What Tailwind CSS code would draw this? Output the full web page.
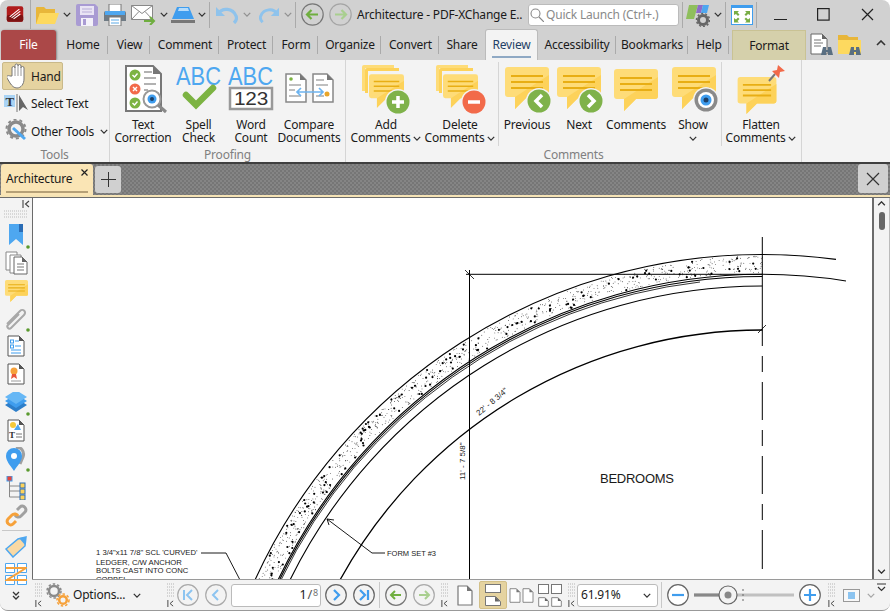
<!DOCTYPE html>
<html lang="en">
<head>
<meta charset="UTF-8">
<title>Architecture - PDF-XChange Editor</title>
<script src="https://cdn.jsdelivr.net/npm/@tailwindcss/browser@4"></script>
</head>
<body class="w-[890px] h-[612px] overflow-hidden bg-white font-['Noto_Sans',sans-serif] text-[12px] tracking-[-0.2px] text-[#1a1a1a]">

<!-- shared icons -->
<svg class="hidden">
  <symbol id="bubble" viewBox="0 0 44 42"><path d="M3 0h38a3 3 0 0 1 3 3v24a3 3 0 0 1-3 3H22L10 42V30H3a3 3 0 0 1-3-3V3a3 3 0 0 1 3-3z" fill="#fedc78"/><path d="M44 8v19a3 3 0 0 1-3 3H22L10 42V30z" fill="#fdd25a"/><path d="M6 9h32M6 15h32M6 21h32" stroke="#e8ae14" stroke-width="2"/></symbol>
  <symbol id="chev" viewBox="0 0 10 6"><path d="M1 1l4 4 4-4" fill="none" stroke="#333" stroke-width="1.6"/></symbol>
  <symbol id="grip" viewBox="0 0 9 15"><path d="M1 1h7M1 4h7M1 7h7M1 10h7M1 13h7" stroke="#b5b5b5" stroke-dasharray="1 1" fill="none"/></symbol>
  <symbol id="collapse" viewBox="0 0 8 8"><path d="M1 0v8M7 1L3.5 4 7 7" fill="none" stroke="#444" stroke-width="1.1"/></symbol>
  <symbol id="page" viewBox="0 0 16 21"><path d="M1 1h9l5 5v14H1z" fill="#fff" stroke="#777" stroke-width="1.2" stroke-linejoin="round"/><path d="M10 1l5 5h-5z" fill="#777"/></symbol>
</svg>

<div class="w-[890px] h-[611px] flex flex-col bg-[#d1d1d1] rounded-t-lg rounded-b-lg border-b border-[#999] overflow-hidden">

  <!-- title bar -->
  <div class="h-[29px] flex items-center shrink-0">
    <svg class="w-[31px] h-[29px] border-r border-[#aaa]" viewBox="0 0 31 29"><rect x="7" y="6" width="17" height="16" rx="2" fill="#b01c1c"/><rect x="7" y="15" width="17" height="7" rx="2" fill="#7d1212"/><path d="M10 17l10-8M12 18l9-7M14 19l7-5" stroke="#fff" stroke-width="1.1"/></svg>
    <svg class="ml-[5px] w-[23px] h-[20px]" viewBox="0 0 23 20"><path d="M0 3a1 1 0 0 1 1-1h7l2 2h9v4H4L1 19H0z" fill="#e8b63a"/><path d="M4 8h19l-4 11H0z" fill="#fdd95f"/></svg>
    <svg class="ml-[4px] w-[8px] h-[5px]"><use href="#chev"/></svg>
    <svg class="ml-[5px] w-[22px] h-[22px]" viewBox="0 0 22 22"><path d="M2 0h17l3 3v17a2 2 0 0 1-2 2H2a2 2 0 0 1-2-2V2a2 2 0 0 1 2-2z" fill="#a99bd3"/><rect x="4" y="2" width="14" height="9" fill="#e9e4f4"/><path d="M6 5h10M6 8h10" stroke="#b8add8"/><rect x="5" y="14" width="12" height="8" fill="#f3f1f9"/><rect x="7" y="15" width="3" height="6" fill="#a99bd3"/></svg>
    <svg class="ml-[6px] w-[22px] h-[22px]" viewBox="0 0 22 22"><rect x="5" y="0" width="12" height="8" fill="#fff" stroke="#777"/><path d="M2 7h18a2 2 0 0 1 2 2v8H0V9a2 2 0 0 1 2-2z" fill="#6f7b85"/><rect x="1" y="7" width="20" height="4" fill="#4ea7f0"/><rect x="5" y="13" width="12" height="9" fill="#fff" stroke="#777"/><path d="M7 16h8M7 19h8" stroke="#5aa9e6"/></svg>
    <svg class="ml-[5px] w-[25px] h-[21px]" viewBox="0 0 25 21"><path d="M.5 1.500h21v14H.5z" fill="#fff" stroke="#888"/><path d="M.5 1.500l10.500 8 10.500-8M.5 15.500l7.500-8M21.500 15.500l-7.500-8" fill="none" stroke="#888"/><path d="M13 17h9M19 13l4 4-4 4" fill="none" stroke="#6fae3f" stroke-width="2"/></svg>
    <svg class="ml-[4px] w-[8px] h-[5px]"><use href="#chev"/></svg>
    <svg class="ml-[3px] w-[24px] h-[16px]" viewBox="0 0 24 16"><path d="M6 0h12l5 12H1z" fill="#3f9dee"/><path d="M8 1h9l1 3H7z" fill="#b6dcfb"/><rect x="0" y="13" width="24" height="3" fill="#777"/></svg>
    <svg class="ml-[3px] w-[8px] h-[5px]"><use href="#chev"/></svg>
    <div class="ml-[3px] w-px h-[26px] bg-[#aaa]"></div>
    <svg class="ml-[6px] w-[22px] h-[18px]" viewBox="0 0 22 18"><path d="M2 8c4-7 15-6 18 2 1 2 0 5-2 7" fill="none" stroke="#8fc3ec" stroke-width="3.200"/><path d="M0 1v9h9z" fill="#8fc3ec"/></svg>
    <svg class="ml-[5px] w-[8px] h-[5px] opacity-40"><use href="#chev"/></svg>
    <svg class="ml-[8px] w-[20px] h-[18px]" viewBox="0 0 22 18"><path d="M20 8C16 1 5 2 2 10c-1 2 0 5 2 7" fill="none" stroke="#8fc3ec" stroke-width="3.200"/><path d="M22 1v9h-9z" fill="#8fc3ec"/></svg>
    <svg class="ml-[5px] w-[8px] h-[5px] opacity-40"><use href="#chev"/></svg>
    <div class="ml-[3px] w-px h-[26px] bg-[#aaa]"></div>
    <svg class="ml-[5px] w-[23px] h-[23px]" viewBox="0 0 23 23"><circle cx="11.500" cy="11.500" r="10.700" fill="none" stroke="#777" stroke-width="1.200"/><path d="M17 11.500H6M10.500 7l-4.500 4.500 4.500 4.500" fill="none" stroke="#6fae3f" stroke-width="2.200"/></svg>
    <svg class="ml-[5px] w-[23px] h-[23px]" viewBox="0 0 23 23"><circle cx="11.500" cy="11.500" r="10.700" fill="none" stroke="#a5a5a5" stroke-width="1.200"/><path d="M6 11.500h11M12.500 7l4.500 4.500-4.500 4.500" fill="none" stroke="#a9cf8f" stroke-width="2.200"/></svg>
    <span class="ml-[5px] w-[171px] whitespace-nowrap text-[12px]">Architecture - PDF-XChange E..</span>
    <div class="w-[151px] h-[22px] bg-white border border-[#bbb] rounded-[3px] flex items-center text-[#8a8a8a] text-[12px]">
      <svg class="ml-[1px] w-[14px] h-[14px]" viewBox="0 0 14 14"><circle cx="5.500" cy="5.500" r="4.500" fill="none" stroke="#888" stroke-width="1.100"/><path d="M9 9l5 5" stroke="#888" stroke-width="1.200"/></svg>
      <span class="ml-[2px] whitespace-nowrap">Quick Launch (Ctrl+.)</span>
    </div>
    <div class="ml-[3px] w-px h-[26px] bg-[#aaa]"></div>
    <svg class="ml-[3px] w-[24px] h-[24px]" viewBox="0 0 24 24"><path d="M3 2h9l-4 14H0z" fill="#8fbf5d"/><path d="M12 2h5l-2 8H10z" fill="#8d6cc9"/><path d="M17 2h6l-2 8h-6z" fill="#4ea7f0"/><circle cx="17" cy="17" r="4.500" fill="none" stroke="#666" stroke-width="3"/><circle cx="17" cy="17" r="6.500" fill="none" stroke="#666" stroke-width="1.500" stroke-dasharray="2 2"/></svg>
    <svg class="ml-[4px] w-[8px] h-[5px]"><use href="#chev"/></svg>
    <div class="ml-[3px] w-px h-[26px] bg-[#aaa]"></div>
    <svg class="ml-[5px] w-[22px] h-[20px]" viewBox="0 0 22 20"><rect x=".5" y=".5" width="21" height="19" fill="#fff" stroke="#3f9dee"/><rect x="0" y="0" width="22" height="3" fill="#3f9dee"/><path d="M3 6l5 0-1.500 1.500 2 2-1.500 1.500-2-2L3 10zM19 6h-5l1.500 1.500-2 2 1.500 1.500 2-2L19 10zM3 17.500h5l-1.500-1.500 2-2-1.500-1.500-2 2L3 13zM19 17.500h-5l1.500-1.500-2-2 1.500-1.500 2 2L19 13z" fill="#78ad45"/></svg>
    <div class="ml-[3px] w-px h-[26px] bg-[#aaa]"></div>
    <svg class="ml-[17px] w-[13px] h-[13px]" viewBox="0 0 13 13"><path d="M0 11.500h13" stroke="#222" stroke-width="1.200"/></svg>
    <svg class="ml-[30px] w-[13px] h-[13px]" viewBox="0 0 13 13"><rect x=".6" y=".6" width="11.500" height="11.500" fill="none" stroke="#222" stroke-width="1.200"/></svg>
    <svg class="ml-[31px] w-[13px] h-[13px]" viewBox="0 0 13 13"><path d="M1 1l11 11M12 1L1 12" stroke="#222" stroke-width="1.200"/></svg>
  </div>

  <!-- ribbon tabs -->
  <div class="h-[31px] flex items-center shrink-0 text-[12px]">
    <div class="ml-px w-[55px] h-[30px] mt-px self-start bg-[#ab4848] rounded-t-[3px] text-white flex items-center justify-center shadow-[1px_0_2px_#888]">File</div>
    <div class="w-[52px] h-[18px] pl-[3px] border-r border-[#aaa] flex items-center justify-center">Home</div>
    <div class="w-[42px] h-[18px] pl-[2px] border-r border-[#aaa] flex items-center justify-center">View</div>
    <div class="w-[69px] h-[18px] pl-[2px] border-r border-[#aaa] flex items-center justify-center">Comment</div>
    <div class="w-[54px] h-[18px] pl-[2px] border-r border-[#aaa] flex items-center justify-center">Protect</div>
    <div class="w-[45px] h-[18px] pl-[2px] border-r border-[#aaa] flex items-center justify-center">Form</div>
    <div class="w-[63px] h-[18px] pl-[2px] border-r border-[#aaa] flex items-center justify-center">Organize</div>
    <div class="w-[58px] h-[18px] pl-[2px] border-r border-[#aaa] flex items-center justify-center">Convert</div>
    <div class="w-[46px] h-[18px] flex items-center justify-center">Share</div>
    <div class="relative w-[53px] h-[31px] self-end bg-[#f3f3f3] border border-b-0 border-[#bbb] rounded-t-[3px] flex items-center justify-center text-[#1f3f66]">Review<div class="absolute left-[6px] right-[6px] bottom-[2px] h-[2px] bg-[#8fa9c4]"></div></div>
    <div class="w-[78px] h-[18px] pl-px border-r border-[#aaa] flex items-center justify-center">Accessibility</div>
    <div class="w-[72px] h-[18px] pl-px border-r border-[#aaa] flex items-center justify-center">Bookmarks</div>
    <div class="w-[41px] h-[18px] pl-[2px] border-r border-[#aaa] flex items-center justify-center">Help</div>
    <div class="ml-[3px] w-[74px] h-[30px] self-end bg-[#d5d0ab] border-x border-t border-[#c9c294] flex items-center justify-center">Format</div>
    <svg class="ml-[4px] w-[24px] h-[24px]" viewBox="0 0 24 24"><path d="M1 1h11l5 5v15H1z" fill="#fff" stroke="#666"/><path d="M12 1l5 5h-5z" fill="#666"/><path d="M4 7h7M4 10h9M4 13h7" stroke="#777"/><path d="M13 14h3v3h2v-3h3l2 8h-5v-3h-2v3h-5z" fill="#5a6f82"/></svg>
    <svg class="ml-[4px] w-[24px] h-[24px]" viewBox="0 0 24 24"><path d="M0 2h9l2 2h9v5H0z" fill="#e8b63a"/><path d="M0 7h23v14H0z" fill="#fdd95f"/><path d="M13 14h3v3h2v-3h3l2 8h-5v-3h-2v3h-5z" fill="#5a6f82"/></svg>
    <svg class="ml-[14px] w-[10px] h-[6px] -mt-[3px]"><use href="#chev" transform="rotate(180 5 3)"/></svg>
  </div>

  <!-- ribbon -->
  <div class="h-[102px] flex bg-[#f3f3f3] shrink-0 text-[12px] leading-[13px]">
    <!-- tools -->
    <div class="w-[110px] flex flex-col border-r border-[#d5d5d5] shrink-0">
      <div class="h-[85px] pl-[2px] pt-[2px] flex flex-col">
        <div class="w-[61px] h-[28px] bg-[#e5d3a0] border border-[#c9b98a] rounded-[2px] flex items-center">
          <svg class="ml-[4px] w-[22px] h-[26px]" viewBox="0 0 22 26"><path d="M5 13V5a1.500 1.500 0 0 1 3 0V2.500a1.500 1.500 0 0 1 3 0V3a1.500 1.500 0 0 1 3 0v2a1.500 1.500 0 0 1 3 0v11c0 5-3 9-7 9-3 0-5-2-7-5l-3-5c-1-2 1-3 3-2z" fill="#fff" stroke="#777"/><path d="M8 5v8M11 3v10M14 4v9" stroke="#999" fill="none"/></svg>
          <span class="ml-[2px]">Hand</span>
        </div>
        <div class="h-[28px] flex items-center">
          <svg class="ml-[2px] w-[24px] h-[24px]" viewBox="0 0 24 24"><rect x="0" y="3" width="11" height="12" fill="#a9d3f5"/><text x="1.500" y="13.500" font-family="Liberation Serif" font-size="13" font-weight="700" fill="#333">T</text><path d="M13 2v18" stroke="#777"/><path d="M15 3v16l4-4 5 3z" fill="#666"/></svg>
          <span class="ml-[3px] whitespace-nowrap">Select Text</span>
        </div>
        <div class="h-[28px] flex items-center">
          <svg class="ml-[3px] w-[24px] h-[24px]" viewBox="0 0 24 24"><circle cx="11" cy="10" r="7" fill="none" stroke="#8a8a8a" stroke-width="3.500"/><circle cx="11" cy="10" r="9.500" fill="none" stroke="#8a8a8a" stroke-width="2" stroke-dasharray="3 3"/><path d="M8 9l12 11" stroke="#4ea7f0" stroke-width="3"/></svg>
          <span class="ml-[2px] whitespace-nowrap">Other Tools</span>
          <svg class="ml-[6px] w-[8px] h-[5px] shrink-0"><use href="#chev"/></svg>
        </div>
      </div>
      <div class="flex-1 flex items-center justify-center pt-px text-[#808080]">Tools</div>
    </div>
    <!-- proofing -->
    <div class="w-[236px] flex flex-col border-r border-[#d5d5d5] shrink-0">
      <div class="h-[85px] pl-[5px] flex">
        <div class="w-[56px] flex flex-col items-center">
          <svg class="w-[56px] h-[57px]" viewBox="115 60 56 57"><path d="M126 66h27l8 8v37h-35z" fill="#fff" stroke="#777" stroke-width="2"/><path d="M153 66l8 8h-8z" fill="#777"/><circle cx="135" cy="75" r="5.500" fill="#7cb342"/><circle cx="135" cy="89" r="5.500" fill="#f26a4a"/><circle cx="135" cy="103" r="5.500" fill="#7cb342"/><path d="M132.500 75l2 2 3-3.500M133 87l4 4M137 87l-4 4M132.500 103l2 2 3-3.500" fill="none" stroke="#fff" stroke-width="1.400"/><path d="M144 72h8M144 78h12M144 84h12M144 90h4" stroke="#999" stroke-width="1.500"/><circle cx="152" cy="99" r="8.500" fill="#fff" stroke="#999" stroke-width="2"/><circle cx="152" cy="99" r="4.500" fill="#3f9dee"/><circle cx="152" cy="99" r="2" fill="#1d3f66"/><path d="M158 105l8 7" stroke="#888" stroke-width="3"/></svg>
          <span class="mt-px text-center whitespace-nowrap">Text<br>Correction</span>
        </div>
        <div class="w-[55px] flex flex-col items-center">
          <svg class="w-[55px] h-[57px]" viewBox="171 60 55 57"><text x="176" y="85" font-family="Liberation Sans" font-size="25" letter-spacing="0" fill="#4ea7f0" textLength="45" lengthAdjust="spacingAndGlyphs">ABC</text><path d="M186 95l10 10 17-17" fill="none" stroke="#7cb342" stroke-width="6.500" stroke-linecap="round"/></svg>
          <span class="mt-px text-center whitespace-nowrap">Spell<br>Check</span>
        </div>
        <div class="w-[50px] flex flex-col items-center">
          <svg class="w-[50px] h-[57px]" viewBox="226 60 50 57"><text x="228" y="85" font-family="Liberation Sans" font-size="25" letter-spacing="0" fill="#4ea7f0" textLength="45" lengthAdjust="spacingAndGlyphs">ABC</text><rect x="230" y="88" width="42" height="21" fill="#fff" stroke="#999" stroke-width="2.500"/><text x="234" y="105" font-family="Liberation Sans" font-size="19" fill="#333" textLength="34" lengthAdjust="spacingAndGlyphs">123</text></svg>
          <span class="mt-px text-center whitespace-nowrap">Word<br>Count</span>
        </div>
        <div class="w-[66px] flex flex-col items-center">
          <svg class="w-[66px] h-[57px]" viewBox="276 60 66 57"><path d="M286 74h14l6 6v22h-20z" fill="#fff" stroke="#888" stroke-width="1.500"/><path d="M300 74l6 6h-6z" fill="#777"/><path d="M313 74h14l6 6v22h-20z" fill="#fff" stroke="#888" stroke-width="1.500"/><path d="M327 74l6 6h-6z" fill="#777"/><circle cx="291" cy="79" r="1.800" fill="#7cb342"/><path d="M289 85h12M289 90h6M289 96h12M316 80h8M316 85h12M316 96h8" stroke="#aaa" stroke-width="1.300"/><circle cx="327" cy="94" r="2.500" fill="#e8a52a"/><path d="M297 92h26M301 88l-4 4 4 4M319 88l4 4-4 4" fill="none" stroke="#6db4f0" stroke-width="1.700"/></svg>
          <span class="mt-px text-center whitespace-nowrap">Compare<br>Documents</span>
        </div>
      </div>
      <div class="flex-1 flex items-center justify-center pt-px text-[#808080]">Proofing</div>
    </div>
    <!-- comments -->
    <div class="w-[456px] flex flex-col border-r border-[#d5d5d5] shrink-0">
      <div class="h-[85px] pl-[5px] flex">
        <div class="w-[70px] flex flex-col items-center">
          <svg class="w-[70px] h-[57px]" viewBox="351 60 70 57"><path d="M362 67a2 2 0 0 1 2-2h30v3h-29v23h-3z" fill="#fedc78"/><path d="M365 70a2 2 0 0 1 2-2h32v3h-31v22h-3z" fill="#fdd25a"/><use href="#bubble" x="369" y="73" width="35" height="36"/><circle cx="398" cy="102" r="13" fill="#f3f3f3"/><circle cx="398" cy="102" r="11.500" fill="#7fb24a"/><path d="M392 102h12M398 96v12" stroke="#fff" stroke-width="3.500"/></svg>
          <span class="mt-px text-center whitespace-nowrap">Add<br>Comments<svg class="inline ml-[3px] w-[8px] h-[5px]"><use href="#chev"/></svg></span>
        </div>
        <div class="ml-[4px] w-[70px] flex flex-col items-center">
          <svg class="w-[70px] h-[57px]" viewBox="425 60 70 57"><path d="M436 67a2 2 0 0 1 2-2h30v3h-29v23h-3z" fill="#fedc78"/><path d="M439 70a2 2 0 0 1 2-2h32v3h-31v22h-3z" fill="#fdd25a"/><use href="#bubble" x="443" y="73" width="35" height="36"/><circle cx="474" cy="102" r="13" fill="#f3f3f3"/><circle cx="474" cy="102" r="11.500" fill="#f26a4a"/><path d="M468 102h12" stroke="#fff" stroke-width="3.500"/></svg>
          <span class="mt-px text-center whitespace-nowrap">Delete<br>Comments<svg class="inline ml-[3px] w-[8px] h-[5px]"><use href="#chev"/></svg></span>
        </div>
        <div class="ml-[3px] w-px h-[84px] mt-[2px] bg-[#d5d5d5]"></div>
        <div class="ml-[2px] w-[52px] flex flex-col items-center">
          <svg class="w-[52px] h-[57px]" viewBox="501 60 52 57"><use href="#bubble" x="505" y="67" width="44" height="42"/><circle cx="539" cy="101" r="13" fill="#f3f3f3"/><circle cx="539" cy="101" r="11.500" fill="#7fb24a"/><path d="M542 95l-6 6 6 6" fill="none" stroke="#fff" stroke-width="3.500"/></svg>
          <span class="mt-px text-center whitespace-nowrap">Previous</span>
        </div>
        <div class="w-[52px] flex flex-col items-center">
          <svg class="w-[52px] h-[57px]" viewBox="553 60 52 57"><use href="#bubble" x="557" y="67" width="44" height="42"/><circle cx="591" cy="101" r="13" fill="#f3f3f3"/><circle cx="591" cy="101" r="11.500" fill="#7fb24a"/><path d="M588 95l6 6-6 6" fill="none" stroke="#fff" stroke-width="3.500"/></svg>
          <span class="mt-px text-center whitespace-nowrap">Next</span>
        </div>
        <div class="w-[62px] flex flex-col items-center">
          <svg class="w-[62px] h-[57px]" viewBox="605 60 62 57"><use href="#bubble" x="614" y="69" width="44" height="42"/></svg>
          <span class="mt-px text-center whitespace-nowrap">Comments</span>
        </div>
        <div class="w-[52px] flex flex-col items-center">
          <svg class="w-[52px] h-[57px]" viewBox="667 60 52 57"><use href="#bubble" x="672" y="67" width="44" height="42"/><circle cx="706" cy="100" r="13" fill="#f3f3f3"/><circle cx="706" cy="100" r="11.500" fill="#8a8a8a"/><circle cx="706" cy="100" r="8" fill="#fff"/><circle cx="706" cy="100" r="5.500" fill="#3f9dee"/><circle cx="706" cy="100" r="2.500" fill="#1d3f66"/></svg>
          <span class="mt-px text-center whitespace-nowrap">Show<br><svg class="inline w-[8px] h-[5px]"><use href="#chev"/></svg></span>
        </div>
        <div class="ml-[2px] w-px h-[84px] mt-[2px] bg-[#d5d5d5]"></div>
        <div class="w-[78px] flex flex-col items-center">
          <svg class="w-[78px] h-[57px]" viewBox="722 60 78 57"><use href="#bubble" x="737" y="77" width="40" height="37"/><path d="M769 81l6-7" stroke="#777" stroke-width="2"/><path d="M772 71l7 7 1-6 5-1-7-6-1 5z" fill="#f26a4a"/></svg>
          <span class="mt-px text-center whitespace-nowrap">Flatten<br>Comments<svg class="inline ml-[3px] w-[8px] h-[5px]"><use href="#chev"/></svg></span>
        </div>
      </div>
      <div class="flex-1 flex items-center justify-center pt-px text-[#808080]">Comments</div>
    </div>
    <div class="flex-1"></div>
  </div>

  <!-- document tabs -->
  <div class="h-[33px] shrink-0 flex items-end border-t-2 border-[#3f3f3f] bg-[repeating-conic-gradient(#767676_0_25%,#858585_0_50%)] bg-[length:4px_4px] pl-px">
    <div class="relative w-[92px] h-[31px] bg-[#fae5b5] rounded-t-[3px] flex items-center pl-[5px] pb-[2px] text-[12px]">
      Architecture
      <svg class="absolute right-[5px] top-[5px] w-[7px] h-[7px]" viewBox="0 0 7 7"><path d="M.5.500l6 6M6.500.500l-6 6" stroke="#222" stroke-width="1.200"/></svg>
      <div class="absolute left-[5px] right-[5px] bottom-[2px] h-[2px] bg-[#b5a077]"></div>
    </div>
    <div class="ml-[2px] mb-[2px] w-[26px] h-[27px] bg-[#d0d0d0] rounded-[3px] flex items-center justify-center">
      <svg class="w-[15px] h-[15px]" viewBox="0 0 15 15"><path d="M7.500 0v15M0 7.500h15" stroke="#333"/></svg>
    </div>
    <div class="flex-1"></div>
    <div class="mr-[2px] mb-[2px] w-[30px] h-[29px] bg-[#d0d0d0] rounded-[3px] flex items-center justify-center">
      <svg class="w-[14px] h-[14px]" viewBox="0 0 14 14"><path d="M1 1l12 12M13 1L1 13" stroke="#333" stroke-width="1.200"/></svg>
    </div>
  </div>
  <div class="h-[3px] shrink-0 bg-[#f5e3b5] border-b border-[#6b6b6b]"></div>

  <!-- workspace -->
  <div class="flex-1 min-h-0 flex bg-[#f3f3f3]">
    <!-- side toolbar -->
    <div class="w-[32px] shrink-0 flex flex-col items-center relative">
      <svg class="absolute right-[2px] top-[2px] w-[8px] h-[8px]"><use href="#collapse"/></svg>
      <svg class="mt-[12px] w-[24px] h-[10px]" viewBox="0 0 24 10"><path d="M0 1h24M0 4h24M0 7h24" stroke="#bbb" stroke-dasharray="1 1"/></svg>
      <svg class="mt-[4px] w-[32px] h-[26px]" viewBox="0 0 32 26"><path d="M9 0h14v21l-7-6-7 6z" fill="#4ea7f0"/><rect x="19" y="0" width="4" height="8" fill="#2a6cb5"/><circle cx="28" cy="23" r="1.800" fill="#5a9a2e"/></svg>
      <svg class="mt-[1px] w-[23px] h-[24px]" viewBox="0 0 23 24"><path d="M1 1h11v18H1z" fill="#fff" stroke="#888"/><path d="M5 4h11v18H5z" fill="#fff" stroke="#888"/><path d="M9 6h8l5 5v12H9z" fill="#fff" stroke="#666"/><path d="M17 6l5 5h-5z" fill="#666"/><path d="M12 13h7M12 16h7M12 19h7" stroke="#777"/></svg>
      <svg class="mt-[5px] w-[23px] h-[22px]"><use href="#bubble"/></svg>
      <svg class="mt-[5px] w-[32px] h-[25px]" viewBox="0 0 32 25"><path d="M7 17L20 4c3-3 7 1 4 4L11 21c-2 2-5-1-3-3l11-11" fill="none" stroke="#a8a8a8" stroke-width="2"/><circle cx="28" cy="23" r="1.800" fill="#5a9a2e"/></svg>
      <svg class="mt-[3px] w-[18px] h-[22px]" viewBox="0 0 18 22"><path d="M1 1h11l5 5v15H1z" fill="#fff" stroke="#555"/><path d="M12 1l5 5h-5z" fill="#555"/><rect x="3.500" y="5" width="3" height="3" fill="none" stroke="#3f9dee"/><rect x="3.500" y="10" width="3" height="3" fill="none" stroke="#3f9dee"/><path d="M8 6h4M8 11h6M4 15h10M4 18h10" stroke="#3f9dee"/></svg>
      <svg class="mt-[6px] w-[18px] h-[22px]" viewBox="0 0 18 22"><path d="M1 1h11l5 5v15H1z" fill="#fff" stroke="#555"/><path d="M12 1l5 5h-5z" fill="#555"/><circle cx="7" cy="8" r="3.500" fill="#f6a13a"/><path d="M5 11l-1 5 3-2 3 2-1-5" fill="#e8563a"/><path d="M4 18h10" stroke="#999"/></svg>
      <svg class="mt-[7px] w-[32px] h-[24px]" viewBox="0 0 32 24"><path d="M5 13l11 7 11-7-11-7z" fill="#2d7ec9"/><path d="M5 9l11 7 11-7-11-7z" fill="#3f9dee"/><path d="M5 5l11 7 11-7L16-2z" fill="#66b7f5"/><circle cx="28" cy="22" r="1.800" fill="#5a9a2e"/></svg>
      <svg class="mt-[3px] w-[18px] h-[23px]" viewBox="0 0 18 23"><path d="M1 1h11l5 5v16H1z" fill="#fff" stroke="#555"/><path d="M12 1l5 5h-5z" fill="#555"/><circle cx="6" cy="6" r="3" fill="#f6c93a"/><path d="M7 11l4-6 3 6z" fill="#4ea7f0"/><text x="2" y="19" font-family="Liberation Serif" font-size="9" font-weight="700" fill="#333">T</text><path d="M9 15h6M9 18h6" stroke="#777"/></svg>
      <svg class="mt-[5px] w-[32px] h-[25px]" viewBox="0 0 32 25"><path d="M16 1c5-2 9 4 7 9l-3 7" fill="none" stroke="#a0a0a0" stroke-width="3"/><path d="M14 24C10 18 6 14 6 9a8 8 0 0 1 16 0c0 5-4 9-8 15z" fill="#3f9dee"/><circle cx="14" cy="9" r="3" fill="#fff"/><circle cx="28" cy="23" r="1.800" fill="#5a9a2e"/></svg>
      <svg class="mt-[4px] w-[20px] h-[24px]" viewBox="0 0 20 24"><rect x="1" y="0" width="5" height="5" fill="#e8453a" stroke="#3f9dee"/><path d="M3.500 5v16M3.500 10H14M3.500 15H14M3.500 21H14" stroke="#888"/><rect x="14" y="7" width="5" height="5" fill="#fdd25a" stroke="#2a6cb5"/><rect x="14" y="13" width="5" height="5" fill="#fdd25a" stroke="#2a6cb5"/><rect x="14" y="19" width="5" height="5" fill="#fdd25a" stroke="#2a6cb5"/></svg>
      <svg class="mt-[4px] w-[23px] h-[23px]" viewBox="0 0 23 23"><path d="M12 6l3-3c3-3 8 2 5 5l-4 4c-2 2-5 1-6-1" fill="none" stroke="#a0a0a0" stroke-width="3"/><path d="M11 17l-3 3c-3 3-8-2-5-5l4-4c2-2 5-1 6 1" fill="none" stroke="#f6a13a" stroke-width="3"/></svg>
      <div class="mt-[3px] w-[28px] h-px shrink-0 bg-[#c8c8c8]"></div>
      <svg class="mt-[5px] w-[22px] h-[22px]" viewBox="0 0 22 22"><path d="M1 13L13 3l8-2-1 9L8 21z" fill="#f9d9a4" stroke="#4ea7f0" stroke-width="1.500"/><path d="M14 2l7-1-1 8z" fill="#4ea7f0"/></svg>
      <svg class="mt-[5px] w-[22px] h-[22px]" viewBox="0 0 22 22"><path d="M.5.500h9v9h-9zM12.500.500h9v9h-9zM.5 12.500h9v9h-9zM12.500 12.500h9v9h-9z" fill="#fff" stroke="#4ea7f0"/><path d="M1 5h20L2 17h20" fill="none" stroke="#f6a13a" stroke-width="2"/></svg>
      <svg class="mt-[6px] w-[8px] h-[10px]" viewBox="0 0 8 10"><path d="M1 1l3 3 3-3M1 5l3 3 3-3" fill="none" stroke="#333" stroke-width="1.300"/></svg>
    </div>

    <!-- page + bottom toolbar -->
    <div class="flex-1 min-w-0 flex flex-col">
      <div class="flex-1 min-h-0 flex">
        <div class="relative flex-1 min-w-0 bg-white border-l border-r-2 border-[#6b6b6b] overflow-hidden">
          <svg id="drawing" class="absolute left-0 top-0 w-[840px] h-[382px]" viewBox="33 198 840 382" fill="none" stroke="#000">
            <g stroke-width="1.100">
              <path d="M255 580A557.500 557.500 0 0 1 762.300 254.500A557.500 557.500 0 0 1 836 259.400"/>
              <path d="M278 580A537.700 537.700 0 0 1 762.300 274.300A537.700 537.700 0 0 1 846 281"/>
              <path d="M279.500 580A535.500 535.500 0 0 1 762.300 276.500"/>
              <path d="M281 580A534 534 0 0 1 700 282" stroke-width=".8"/>
              <path d="M290 580A526 526 0 0 1 762.300 286"/>
              <path d="M340 580A482 482 0 0 1 762.300 330" stroke-width="1.300"/>
            </g>
            <g stroke-width="1">
              <path d="M469.500 270V580M466 274.300H762M762.300 237V346M762.300 356V372M762.300 382V420M762.300 430V446M762.300 456V494M762.300 504V520M762.300 530V569"/>
              <path d="M465 270l9 9M758 333l8-8" stroke-width=".8"/>
              <path d="M201 553H226L240 580M385 553H372L327 519M327 519l7 1M327 519l2 6" stroke-width=".9"/>
            </g>
            <g id="speckle" fill="#000" stroke="none"></g>
            <g fill="#1a1a1a" stroke="none" font-family="Liberation Sans" letter-spacing="0">
              <text x="600" y="483" font-size="13" textLength="74">BEDROOMS</text>
              <text x="387" y="556" font-size="7.500">FORM SET #3</text>
              <text x="96" y="555" font-size="7.700">1 3/4"x11 7/8" SCL 'CURVED'</text>
              <text x="96" y="564.500" font-size="7.700">LEDGER, C/W ANCHOR</text>
              <text x="96" y="572.500" font-size="7.700">BOLTS CAST INTO CONC</text>
              <text x="96" y="581.500" font-size="7.700">CORBEL</text>
              <text transform="translate(479 416) rotate(-40)" font-size="8">22' - 8 3/4"</text>
              <text transform="translate(464.500 480) rotate(-90)" font-size="8">11' - 7 5/8"</text>
            </g>
          </svg>
        </div>
        <!-- scrollbar -->
        <div class="w-[15px] shrink-0 flex flex-col items-center">
          <svg class="mt-[3px] w-[9px] h-[5px]"><use href="#chev" transform="rotate(180 4.500 2.500)"/></svg>
          <div class="mt-[6px] w-[6px] h-[18px] rounded-[3px] bg-[#666]"></div>
          <div class="flex-1"></div>
          <svg class="mb-[5px] w-[9px] h-[5px]"><use href="#chev"/></svg>
        </div>
        <div class="w-px shrink-0 bg-[#bbb]"></div>
      </div>

      <!-- bottom toolbar -->
      <div class="relative h-[31px] shrink-0 flex items-center border-t border-[#9a9a9a] text-[12px]">
        <div class="w-[11px] flex flex-col shrink-0 items-center ml-[1px]"><svg class="w-[9px] h-[15px]"><use href="#grip"/></svg><svg class="w-[7px] h-[7px] mt-[2px]"><use href="#collapse"/></svg></div>
        <svg class="ml-[2px] w-[24px] h-[24px]" viewBox="0 0 24 24"><circle cx="8" cy="8" r="5" fill="none" stroke="#8a8a8a" stroke-width="2.500"/><circle cx="8" cy="8" r="7" fill="none" stroke="#8a8a8a" stroke-width="1.500" stroke-dasharray="2.500 2"/><circle cx="17" cy="17" r="3.800" fill="none" stroke="#f6a13a" stroke-width="2.500"/><circle cx="17" cy="17" r="6" fill="none" stroke="#f6a13a" stroke-width="1.500" stroke-dasharray="2.500 2"/></svg>
        <span class="ml-[3px] w-[54px] whitespace-nowrap">Options...</span>
        <svg class="ml-[6px] w-[8px] h-[5px]"><use href="#chev"/></svg>
        <div class="ml-[24px] w-[11px] flex flex-col shrink-0 items-center"><svg class="w-[9px] h-[15px]"><use href="#grip"/></svg><svg class="w-[7px] h-[7px] mt-[2px]"><use href="#collapse"/></svg></div>
        <svg class="ml-[1px] w-[22px] h-[22px]" viewBox="0 0 22 22"><circle cx="11" cy="11" r="10.300" fill="none" stroke="#aaa" stroke-width="1.200"/><path d="M7 6v10M15 6l-5 5 5 5" fill="none" stroke="#8cc4f0" stroke-width="2"/></svg>
        <svg class="ml-[6px] w-[22px] h-[22px]" viewBox="0 0 22 22"><circle cx="11" cy="11" r="10.300" fill="none" stroke="#aaa" stroke-width="1.200"/><path d="M13 6l-5 5 5 5" fill="none" stroke="#8cc4f0" stroke-width="2"/></svg>
        <div class="ml-[4px] w-[90px] h-[23px] bg-white border border-[#bbb] rounded-[3px] flex items-center justify-end pr-[2px] text-[12.500px]">1<span class="text-[#555] text-[13px] mx-px">/</span><span class="text-[#777] text-[9px] -mt-[4px]">8</span></div>
        <svg class="ml-[4px] w-[22px] h-[22px]" viewBox="0 0 22 22"><circle cx="11" cy="11" r="10.300" fill="none" stroke="#666" stroke-width="1.200"/><path d="M9 6l5 5-5 5" fill="none" stroke="#3f9dee" stroke-width="2.200"/></svg>
        <svg class="ml-[6px] w-[22px] h-[22px]" viewBox="0 0 22 22"><circle cx="11" cy="11" r="10.300" fill="none" stroke="#666" stroke-width="1.200"/><path d="M7 6l5 5-5 5M15 6v10" fill="none" stroke="#3f9dee" stroke-width="2.200"/></svg>
        <div class="ml-[4px] w-px h-[26px] bg-[#c8c8c8]"></div>
        <svg class="ml-[5px] w-[22px] h-[22px]" viewBox="0 0 22 22"><circle cx="11" cy="11" r="10.300" fill="none" stroke="#777" stroke-width="1.200"/><path d="M16 11H6M10 7l-4 4 4 4" fill="none" stroke="#6fae3f" stroke-width="2"/></svg>
        <svg class="ml-[6px] w-[22px] h-[22px]" viewBox="0 0 22 22"><circle cx="11" cy="11" r="10.300" fill="none" stroke="#aaa" stroke-width="1.200"/><path d="M6 11h10M12 7l4 4-4 4" fill="none" stroke="#a9cf8f" stroke-width="2"/></svg>
        <div class="ml-[4px] w-[10px] flex flex-col shrink-0 items-center"><svg class="w-[9px] h-[15px]"><use href="#grip"/></svg><svg class="w-[7px] h-[7px] mt-[2px]"><use href="#collapse"/></svg></div>
        <svg class="ml-[8px] w-[16px] h-[21px]"><use href="#page"/></svg>
        <div class="ml-[6px] w-[28px] h-[28px] bg-[#e5d3a0] border border-[#d3c088] rounded-[2px] flex flex-col items-center justify-center gap-[3px]">
          <div class="w-[16px] h-[9px] bg-white border border-[#777]"></div>
          <svg class="w-[16px] h-[10px]" viewBox="0 0 16 10"><path d="M.5.500h10l5 5v4H.5z" fill="#fff" stroke="#777"/><path d="M10 .5l5 5h-5z" fill="#666"/></svg>
        </div>
        <svg class="ml-[2px] w-[12px] h-[15px]"><use href="#page"/></svg>
        <svg class="ml-[1px] w-[12px] h-[15px]"><use href="#page"/></svg>
        <div class="ml-[4px] w-[24px] h-[22px] grid grid-cols-2 grid-rows-2 gap-x-[2px] gap-y-[3px]">
          <div class="border border-[#777] bg-white"></div><div class="border border-[#777] bg-white"></div>
          <svg class="w-[11px] h-[10px]" viewBox="0 0 16 15" preserveAspectRatio="none"><path d="M1 1h9l5 5v8H1z" fill="#fff" stroke="#777" stroke-width="1.300"/><path d="M10 1l5 5h-5z" fill="#666"/></svg><svg class="w-[11px] h-[10px]" viewBox="0 0 16 15" preserveAspectRatio="none"><path d="M1 1h9l5 5v8H1z" fill="#fff" stroke="#777" stroke-width="1.300"/><path d="M10 1l5 5h-5z" fill="#666"/></svg>
        </div>
        <div class="ml-[4px] w-[10px] flex flex-col shrink-0 items-center"><svg class="w-[9px] h-[15px]"><use href="#grip"/></svg><svg class="w-[7px] h-[7px] mt-[2px]"><use href="#collapse"/></svg></div>
        <div class="ml-[1px] w-[81px] h-[23px] bg-white border border-[#bbb] rounded-[3px] flex items-center justify-between pl-[3px] pr-[6px]">61.91%<svg class="w-[8px] h-[5px]"><use href="#chev"/></svg></div>
        <div class="ml-[3px] w-px h-[26px] bg-[#c8c8c8]"></div>
        <svg class="ml-[5px] w-[22px] h-[22px]" viewBox="0 0 22 22"><circle cx="11" cy="11" r="10.300" fill="#fff" stroke="#666" stroke-width="1.200"/><path d="M5 11h12" stroke="#3f9dee" stroke-width="2.200"/></svg>
        <svg class="ml-[5px] w-[100px] h-[22px]" viewBox="0 0 100 22"><path d="M0 11h100" stroke="#c0c0c0" stroke-width="3"/><path d="M0 11h25" stroke="#888" stroke-width="3"/><circle cx="34" cy="11" r="9" fill="#f3f3f3" stroke="#666" stroke-width="1.200"/><circle cx="34" cy="11" r="3.500" fill="#888"/><path d="M49 5v2M49 10v2M49 15v2" stroke="#666"/></svg>
        <svg class="ml-[5px] w-[22px] h-[22px]" viewBox="0 0 22 22"><circle cx="11" cy="11" r="10.300" fill="#fff" stroke="#666" stroke-width="1.200"/><path d="M5 11h12M11 5v12" stroke="#3f9dee" stroke-width="2.200"/></svg>
        <div class="ml-[5px] w-[10px] flex flex-col shrink-0 items-center"><svg class="w-[9px] h-[15px]"><use href="#grip"/></svg><svg class="w-[7px] h-[7px] mt-[2px]"><use href="#collapse"/></svg></div>
        <svg class="ml-[7px] w-[17px] h-[13px]" viewBox="0 0 17 13"><rect x=".5" y=".5" width="16" height="12" fill="#f8f8f8" stroke="#999"/><rect x="5" y="3" width="7" height="7" fill="#8cc4f0"/></svg>
        <svg class="ml-[7px] w-[8px] h-[5px] opacity-40"><use href="#chev"/></svg>
        <svg class="absolute right-[4px] top-[3px] w-[9px] h-[9px]" viewBox="0 0 9 9"><path d="M0 1h9M1 4l3.500 3.500L8 4" fill="none" stroke="#333" stroke-width="1.200"/></svg>
      </div>
    </div>
  </div>
</div>

<script>
  // concrete speckle along the band of the arc
  const g = document.getElementById('speckle');
  let seed = 7;
  const rnd = () => (seed = (seed * 16807) % 2147483647) / 2147483647;
  let out = '';
  for (let i = 0; i < 950; i++) {
    const t = rnd() * 1.15;
    const r = 539 + rnd() * 17;
    const x = 762.3 - r * Math.sin(t);
    const y = 812 - r * Math.cos(t);
    const big = rnd() < 0.14;
    out += '<circle cx="' + x.toFixed(1) + '" cy="' + y.toFixed(1) + '" r="' + (big ? 1.1 : 0.45) + '"/>';
  }
  g.innerHTML = out;
</script>
</body>
</html>
